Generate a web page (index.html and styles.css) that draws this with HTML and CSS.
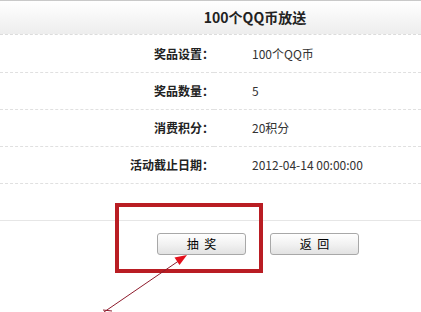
FILE: index.html
```html
<!DOCTYPE html>
<html lang="zh-CN">
<head>
    <meta charset="UTF-8">
    <title>100个QQ币放送</title>
    <link rel="stylesheet" href="styles.css">
</head>
<body>
    <main class="page">
        <div class="head">
            <h1>100个QQ币放送</h1>
        </div>
        <table class="info">
            <tr>
                <th>奖品设置：</th>
                <td>100个QQ币</td>
            </tr>
            <tr>
                <th>奖品数量：</th>
                <td>5</td>
            </tr>
            <tr>
                <th>消费积分：</th>
                <td>20积分</td>
            </tr>
            <tr>
                <th>活动截止日期：</th>
                <td>2012-04-14 00:00:00</td>
            </tr>
        </table>
        <div class="gap"></div>
        <div class="btns">
            <button class="btn" type="button">抽 奖</button>
            <button class="btn" type="button">返 回</button>
        </div>

        <!-- annotation drawn over the screenshot -->
        <svg class="mark" width="421" height="312" viewBox="0 0 421 312">
            <rect x="117" y="205" width="144" height="66" fill="none" stroke="#b91d23" stroke-width="4"/>
            <line x1="104" y1="312" x2="180" y2="260" stroke="#8e1b2c" stroke-width="1"/>
            <line x1="103" y1="310" x2="112" y2="311" stroke="#8e1b2c" stroke-width="1"/>
            <polygon points="187,255 174.5,257.5 179.5,265" fill="#e3101c"/>
        </svg>
    </main>
</body>
</html>
```

FILE: styles.css
```css
* {
    padding: 0;
    margin: 0;
    box-sizing: border-box;
    font-family: "Noto Sans CJK SC", sans-serif;
}

body {
    width: 421px;
    height: 312px;
    overflow: hidden;
    background: #fff;
}

.page {
    position: relative;
    width: 421px;
    height: 312px;
    border-top: 1px solid #c9c9c9;
}

.head {
    height: 34px;
    padding-left: 89px;
    text-align: center;
    background: linear-gradient(#ffffff, #ededed);
    border-bottom: 1px dashed #dcdcdc;
}

.head h1 {
    font-size: 14px;
    line-height: 33px;
    font-weight: bold;
    color: #222;
}

.info {
    width: 421px;
    border-collapse: collapse;
}

.info tr {
    height: 37px;
    border-bottom: 1px dashed #e0e0e0;
}

.info th {
    width: 214px;
    text-align: right;
    font-size: 12px;
    font-weight: bold;
    color: #222;
}

.info td {
    padding-left: 38px;
    font-size: 12px;
    color: #333;
}

.gap {
    height: 37px;
    border-bottom: 1px solid #e6e6e6;
}

.btns {
    display: flex;
    gap: 24px;
    padding: 12px 0 0 157px;
}

.btn {
    width: 89px;
    height: 22px;
    font-size: 12px;
    word-spacing: 3px;
    color: #000;
    border: 1px solid #a8a8a8;
    border-radius: 3px;
    background: linear-gradient(#fefefe, #f2f2f2 50%, #e2e2e2);
}

.mark {
    position: absolute;
    left: 0;
    top: -1px;
}
```
